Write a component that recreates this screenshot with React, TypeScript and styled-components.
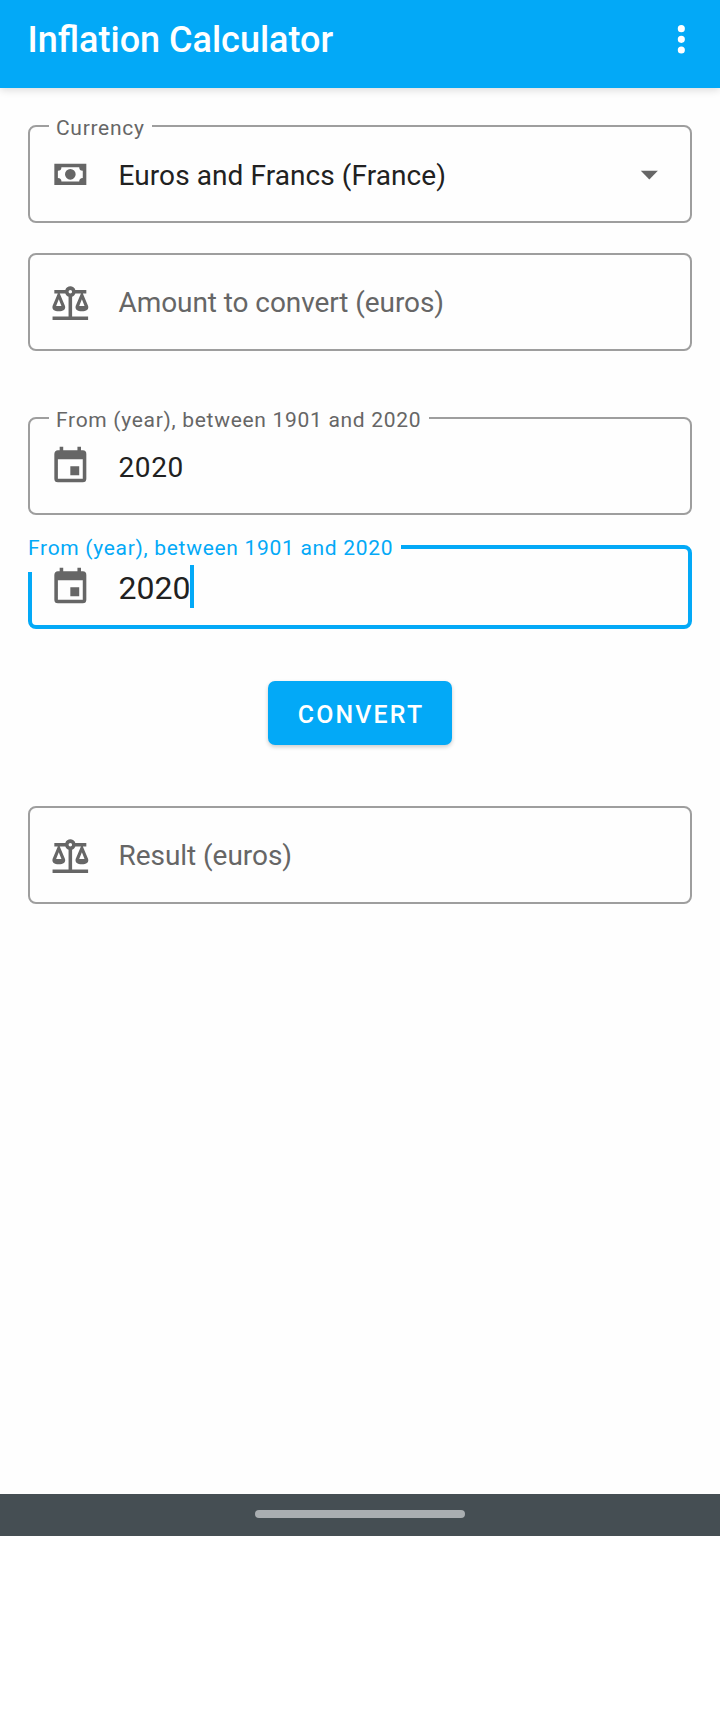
import React from "react";
import styled, { createGlobalStyle } from "styled-components";

const BLUE = "#03a9f7";

const GlobalStyle = createGlobalStyle`
  *, *::before, *::after { box-sizing: border-box; }
  body {
    margin: 0;
    background: #fff;
    font-family: Roboto, "Liberation Sans", sans-serif;
    color: #212121;
  }
`;

const Screen = styled.div`
  display: flex;
  flex-direction: column;
  height: 1536px;
  background: #fefefe;
`;

const AppBar = styled.header`
  display: flex;
  flex: none;
  align-items: center;
  justify-content: space-between;
  height: 88px;
  padding: 0 17.7px 9px 27.5px;
  background: ${BLUE};
  color: #fff;
  box-shadow: 0 2px 8px rgba(0, 0, 0, 0.14);
`;

const Title = styled.h1`
  margin: 0;
  padding-top: 1px;
  font-size: 36px;
  line-height: 42px;
  font-weight: 500;
`;

const MenuButton = styled.button`
  display: flex;
  padding: 0;
  border: 0;
  background: none;
  color: inherit;
`;

const Form = styled.main`
  display: flex;
  flex: 1;
  flex-direction: column;
  padding: 24px 28px 0;
`;

const Glyph = styled.svg`
  flex: none;
  width: 42.67px;
  height: 42.67px;
  fill: currentColor;
`;

const Outline = styled.fieldset<{ $gap?: number }>`
  flex: none;
  min-width: 0;
  margin: ${(p) => p.$gap ?? 0}px 0 0;
  padding: 0;
  border: 2px solid #9e9e9e;
  border-radius: 8px;
`;

const Legend = styled.legend`
  margin-left: 19px;
  padding: 5px 7.5px 0 7px;
  font-size: 21px;
  line-height: 23px;
  letter-spacing: 0.7px;
  color: #666;
`;

const Row = styled.div<{ $labelled?: boolean }>`
  display: flex;
  align-items: center;
  height: ${(p) => (p.$labelled ? 81 : 94)}px;
  padding: 0 19.5px ${(p) => (p.$labelled ? 13 : 0)}px 18.7px;
  color: #666;
`;

const Value = styled.span<{ $hint?: boolean; $tracking?: number }>`
  flex: 1;
  padding: ${(p) => (p.$hint ? 2 : 4)}px 0 0 27.2px;
  font-size: 28px;
  line-height: 34px;
  letter-spacing: ${(p) => p.$tracking ?? 0}px;
  color: ${(p) => (p.$hint ? "#666" : "#212121")};
`;

const FocusedField = styled.div`
  position: relative;
  flex: none;
  height: 84px;
  margin-top: 30px;
  border: 4px solid ${BLUE};
  border-radius: 8px;
`;

const FocusedRow = styled.div`
  position: relative;
  display: flex;
  align-items: center;
  height: 76px;
  padding-left: 16.7px;
  color: #666;
`;

const FocusedValue = styled.span`
  padding: 2px 0 0 27.2px;
  font-size: 32px;
  line-height: 38px;
  color: #212121;
`;

const Caret = styled.span`
  width: 4px;
  height: 43px;
  margin: 0 0 1px -0.6px;
  background: ${BLUE};
`;

const FloatingLabel = styled.label`
  position: absolute;
  top: -17px;
  left: -4px;
  height: 40px;
  padding: 4px 7.5px 0 0;
  background: #fefefe;
  font-size: 21px;
  line-height: 25px;
  letter-spacing: 0.7px;
  color: ${BLUE};
  white-space: nowrap;
`;

const ConvertButton = styled.button`
  flex: none;
  align-self: center;
  width: 184px;
  height: 64px;
  margin: 52px 0 61px;
  padding: 3px 0 0 2px;
  border: 0;
  border-radius: 7px;
  background: ${BLUE};
  box-shadow: 0 2px 4px rgba(0, 0, 0, 0.2);
  color: #fff;
  font: 500 24.89px/30px Roboto, sans-serif;
  letter-spacing: 2.2px;
`;

const NavBar = styled.footer`
  display: flex;
  flex: none;
  justify-content: center;
  height: 42px;
  padding-top: 16px;
  background: #454e53;
`;

const Handle = styled.div`
  width: 210px;
  height: 8px;
  border-radius: 4px;
  background: #a9aeb1;
`;

const icons = {
  cash: "M3,6H21V18H3V6M12,9A3,3 0 0,1 15,12A3,3 0 0,1 12,15A3,3 0 0,1 9,12A3,3 0 0,1 12,9M7,8A2,2 0 0,1 5,10V14A2,2 0 0,1 7,16H17A2,2 0 0,1 19,14V10A2,2 0 0,1 17,8H7Z",
  scale:
    "M12,3C10.73,3 9.6,3.8 9.18,5H3V7H4.95L2,14C1.53,16 3,17 5.5,17C8,17 9.56,16 9,14L6.05,7H9.17C9.5,7.85 10.15,8.5 11,8.83V20H2V22H22V20H13V8.82C13.85,8.5 14.5,7.85 14.82,7H17.95L15,14C14.53,16 16,17 18.5,17C21,17 22.56,16 22,14L19.05,7H21V5H14.83C14.4,3.8 13.27,3 12,3M12,5A1,1 0 0,1 13,6A1,1 0 0,1 12,7A1,1 0 0,1 11,6A1,1 0 0,1 12,5M5.5,10.25L7,14H4L5.5,10.25M18.5,10.25L20,14H17L18.5,10.25Z",
  calendar:
    "M19,3H18V1H16V3H8V1H6V3H5C3.89,3 3,3.9 3,5V19A2,2 0 0,0 5,21H19A2,2 0 0,0 21,19V5A2,2 0 0,0 19,3M19,19H5V8H19V19M17,12H12V17H17V12Z",
  down: "M7.2,10L12,14.9L16.8,10Z",
  more: "M12,8A2,2 0 1,0 12,4A2,2 0 1,0 12,8M12,14A2,2 0 1,0 12,10A2,2 0 1,0 12,14M12,20A2,2 0 1,0 12,16A2,2 0 1,0 12,20Z",
};

const Icon = ({ name }: { name: keyof typeof icons }) => (
  <Glyph viewBox="0 0 24 24" fillRule="evenodd" aria-hidden="true">
    <path d={icons[name]} />
  </Glyph>
);

export default function App() {
  return (
    <>
      <GlobalStyle />
      <Screen>
        <AppBar>
          <Title>Inflation Calculator</Title>
          <MenuButton aria-label="More options">
            <Icon name="more" />
          </MenuButton>
        </AppBar>
        <Form>
          <Outline>
            <Legend>Currency</Legend>
            <Row $labelled>
              <Icon name="cash" />
              <Value $tracking={0.08}>Euros and Francs (France)</Value>
              <Icon name="down" />
            </Row>
          </Outline>
          <Outline $gap={30}>
            <Row>
              <Icon name="scale" />
              <Value $hint $tracking={-0.08}>
                Amount to convert (euros)
              </Value>
            </Row>
          </Outline>
          <Outline $gap={53}>
            <Legend>From (year), between 1901 and 2020</Legend>
            <Row $labelled>
              <Icon name="calendar" />
              <Value $tracking={0.6}>2020</Value>
            </Row>
          </Outline>
          <FocusedField>
            <FloatingLabel>From (year), between 1901 and 2020</FloatingLabel>
            <FocusedRow>
              <Icon name="calendar" />
              <FocusedValue>2020</FocusedValue>
              <Caret />
            </FocusedRow>
          </FocusedField>
          <ConvertButton>CONVERT</ConvertButton>
          <Outline>
            <Row>
              <Icon name="scale" />
              <Value $hint $tracking={-0.05}>
                Result (euros)
              </Value>
            </Row>
          </Outline>
        </Form>
        <NavBar>
          <Handle />
        </NavBar>
      </Screen>
    </>
  );
}
